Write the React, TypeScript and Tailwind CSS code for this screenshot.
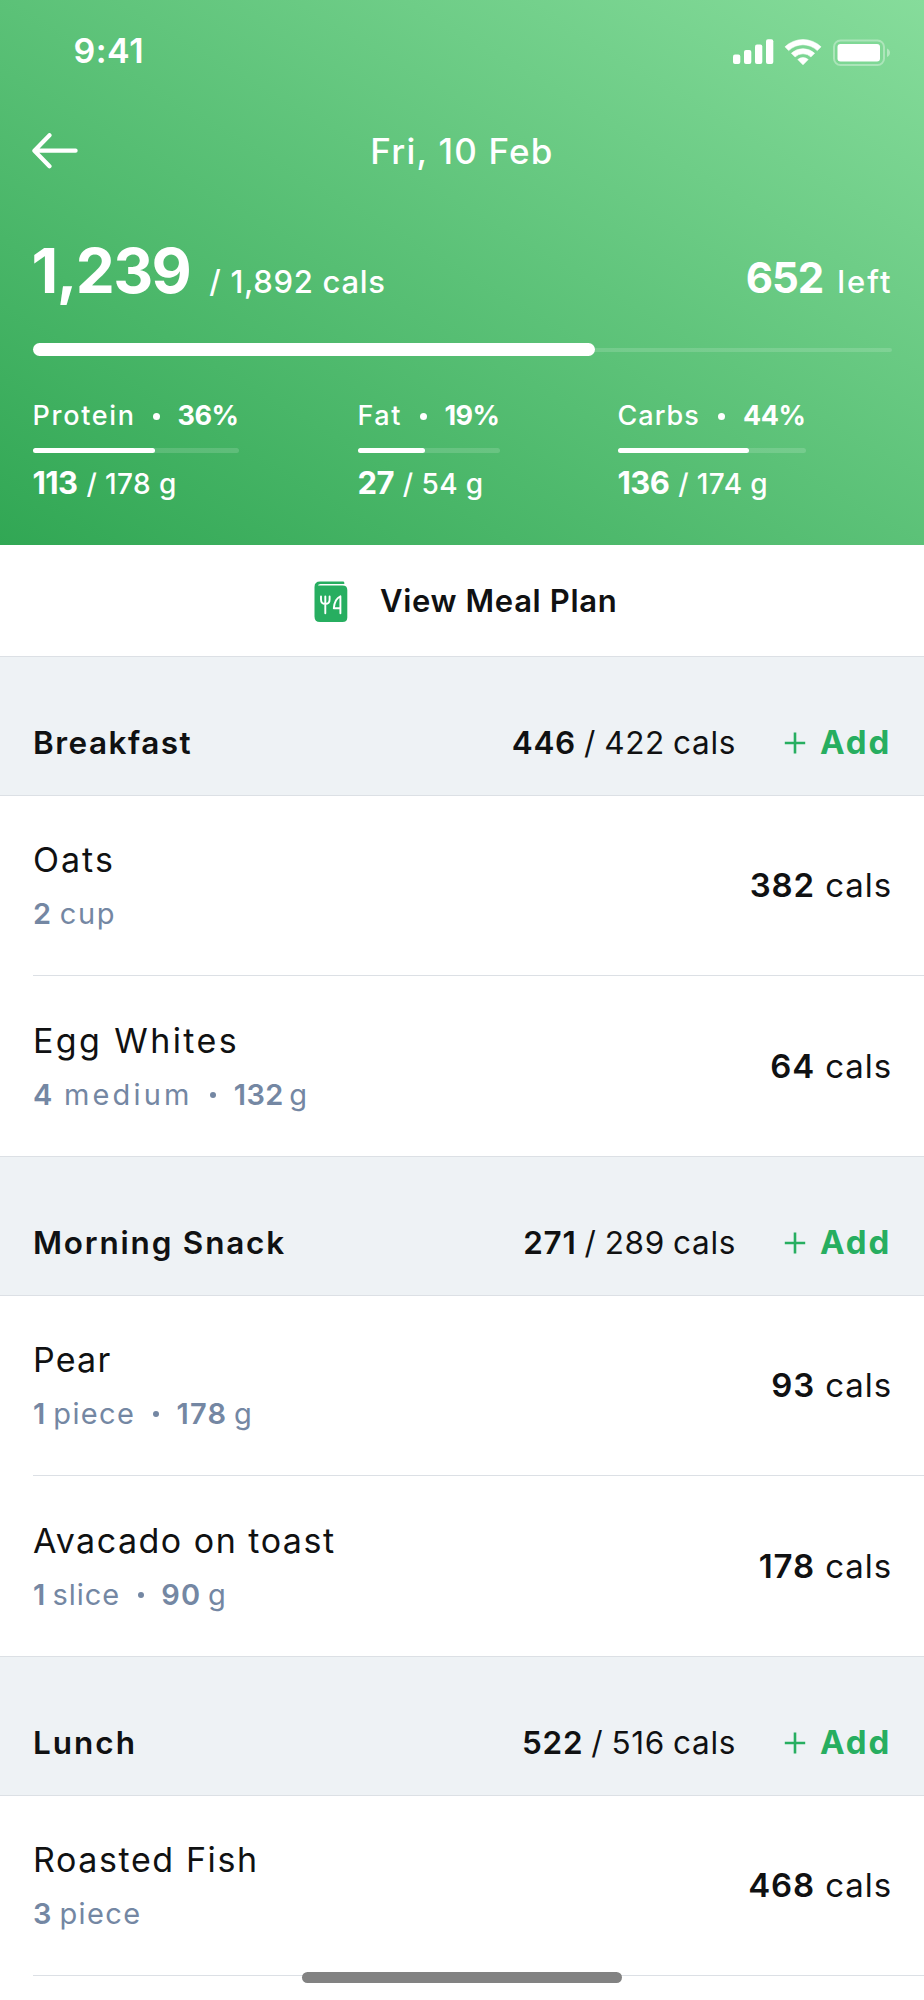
import React from "react";

interface Macro {
  name: string;
  percent: number;
  current: number;
  goal: number;
  width: string;
  tracking: string;
  fill: number;
}

interface Portion {
  amount: number;
  unit: string;
  tracking: string;
}

interface FoodItem {
  name: string;
  tracking: string;
  portions: Portion[];
  cals: number;
}

interface Meal {
  name: string;
  tracking: string;
  current: number;
  goal: number;
  items: FoodItem[];
}

const macros: Macro[] = [
  { name: "Protein", percent: 36, current: 113, goal: 178, width: "w-[206px]", tracking: "tracking-[1.7px]", fill: 59.3 },
  { name: "Fat", percent: 19, current: 27, goal: 54, width: "w-[142px]", tracking: "tracking-[1.5px]", fill: 47.2 },
  { name: "Carbs", percent: 44, current: 136, goal: 174, width: "w-[188px]", tracking: "tracking-[1px]", fill: 70.2 },
];

const meals: Meal[] = [
  {
    name: "Breakfast",
    tracking: "tracking-[1.5px]",
    current: 446,
    goal: 422,
    items: [
      {
        name: "Oats",
        tracking: "tracking-[2px]",
        portions: [{ amount: 2, unit: "cup", tracking: "tracking-[1.7px]" }],
        cals: 382,
      },
      {
        name: "Egg Whites",
        tracking: "tracking-[2.4px]",
        portions: [
          { amount: 4, unit: "medium", tracking: "tracking-[3.2px]" },
          { amount: 132, unit: "g", tracking: "tracking-[0.4px]" },
        ],
        cals: 64,
      },
    ],
  },
  {
    name: "Morning Snack",
    tracking: "tracking-[1.8px]",
    current: 271,
    goal: 289,
    items: [
      {
        name: "Pear",
        tracking: "tracking-[1.2px]",
        portions: [
          { amount: 1, unit: "piece", tracking: "tracking-[1.4px]" },
          { amount: 178, unit: "g", tracking: "tracking-[1.3px]" },
        ],
        cals: 93,
      },
      {
        name: "Avacado on toast",
        tracking: "tracking-[1.5px]",
        portions: [
          { amount: 1, unit: "slice", tracking: "tracking-[1px]" },
          { amount: 90, unit: "g", tracking: "tracking-[1.3px]" },
        ],
        cals: 178,
      },
    ],
  },
  {
    name: "Lunch",
    tracking: "tracking-[2px]",
    current: 522,
    goal: 516,
    items: [
      {
        name: "Roasted Fish",
        tracking: "tracking-[1.6px]",
        portions: [{ amount: 3, unit: "piece", tracking: "tracking-[1.4px]" }],
        cals: 468,
      },
    ],
  },
];

const StatusIcons: React.FC = () => (
  <svg width="160" height="30" viewBox="0 0 160 30" fill="white">
    <rect x="1" y="17.5" width="7.3" height="9.5" rx="2" />
    <rect x="12" y="13" width="7.3" height="14" rx="2" />
    <rect x="23" y="7.5" width="7.3" height="19.5" rx="2" />
    <rect x="34" y="2.2" width="7.3" height="24.8" rx="2" />
    <path d="M53 9.8 A26 26 0 0 1 89 9.8 L85.3 13.6 A20.5 20.5 0 0 0 56.7 13.6 Z" strokeLinejoin="round" stroke="white" strokeWidth="0.6" />
    <path d="M59.4 16.2 A17 17 0 0 1 82.6 16.2 L78.9 19.9 A11.5 11.5 0 0 0 63.1 19.9 Z" strokeLinejoin="round" stroke="white" strokeWidth="0.6" />
    <path d="M65.8 22.5 A8 8 0 0 1 76.2 22.5 L71 27.8 Z" strokeLinejoin="round" stroke="white" strokeWidth="0.6" />
    <rect x="102" y="3.5" width="50" height="24.5" rx="6.5" fill="none" stroke="white" strokeOpacity="0.35" strokeWidth="2" />
    <rect x="105.5" y="7" width="42.5" height="17.5" rx="3" />
    <path d="M155 11.5 C159 13 159 18.5 155 20 Z" fillOpacity="0.4" />
  </svg>
);

const BackArrow: React.FC = () => (
  <svg width="46" height="36" viewBox="0 0 46 36" fill="none" stroke="white" strokeWidth="4.2" strokeLinecap="round" strokeLinejoin="round">
    <path d="M17.5 2.2 L2.4 17.7 L17.5 33.2 M3 17.7 H43.6" />
  </svg>
);

const MealPlanIcon: React.FC = () => (
  <svg width="34" height="42" viewBox="0 0 34 42" fill="none">
    <path d="M6 0.5 H29 Q30.3 0.5 30.3 1.8 V3 H6.5 Q4 3 4 4.6 H28.5 Q33.3 4.6 33.3 9 V36.5 Q33.3 41 28.5 41 H6 Q0.5 41 0.5 35.5 V6 Q0.5 0.5 6 0.5 Z" fill="#27ae60" />
    <g stroke="white" strokeWidth="1.9" strokeLinecap="round" strokeLinejoin="round">
      <path d="M7 15.5 V18.5 Q7 23 11.3 23 Q15.6 23 15.6 18.5 V15.5 M11.3 15.5 V32.2" />
      <path d="M26.4 32.2 V15.3 Q20.5 18 19.8 27.2 H26.4" />
    </g>
  </svg>
);

const PlusIcon: React.FC = () => (
  <svg width="22" height="22" viewBox="0 0 22 22" stroke="#27ae60" strokeWidth="2.6">
    <path d="M11 0.5 V21.5 M0.8 11 H21.2" />
  </svg>
);

const MacroStat: React.FC<{ macro: Macro }> = ({ macro }) => (
  <div>
    <div className={macro.width}>
      <div className="flex items-center justify-between text-[27px] leading-8 font-[550]">
        <span className={macro.tracking}>{macro.name}</span>
        <span className="size-[7px] rounded-full bg-white" />
        <span className="font-bold tracking-[-0.5px]">{macro.percent}%</span>
      </div>
      <div className="mt-4 h-[4.5px] rounded-full bg-white/15">
        <div className="h-full rounded-full bg-white" style={{ width: `${macro.fill}%` }} />
      </div>
    </div>
    <div className="mt-[14.5px] flex items-baseline gap-[9px] leading-8 whitespace-nowrap">
      <span className="text-[31px] font-bold tracking-[-0.6px]">{macro.current}</span>
      <span className="text-[28px] font-[550] tracking-[0.4px]">/ {macro.goal} g</span>
    </div>
  </div>
);

const FoodRow: React.FC<{ item: FoodItem }> = ({ item }) => (
  <div className="ml-[33px] flex h-[181px] items-center justify-between border-[#dce0e5] pr-[32px] first:h-[180px] first:border-b">
    <div className="pt-[4px]">
      <div className={`text-[34px] leading-[50px] ${item.tracking}`}>{item.name}</div>
      <div className="mt-[2px] flex items-center gap-[17.5px] text-[29px] leading-[54px] text-[#7487a3] [word-spacing:-3px]">
        {item.portions.map((portion, i) => (
          <React.Fragment key={portion.unit}>
            {i > 0 && <span className="size-[6px] rounded-full bg-[#7487a3]" />}
            <span className={portion.tracking}>
              <span className="font-semibold">{portion.amount}</span> {portion.unit}
            </span>
          </React.Fragment>
        ))}
      </div>
    </div>
    <div className="text-[33px] tracking-[0.9px]">
      <span className="font-semibold">{item.cals}</span> cals
    </div>
  </div>
);

const MealSection: React.FC<{ meal: Meal }> = ({ meal }) => (
  <section className="h-[500px]">
    <div className="flex h-[140px] items-center border-y border-[#dce0e5] bg-[#eef2f5] px-[33px] pt-[33px] text-[31.5px]">
      <h2 className={`flex-1 font-semibold ${meal.tracking}`}>{meal.name}</h2>
      <div className="tracking-[0.7px] [word-spacing:-1.5px]">
        <span className="font-semibold">{meal.current}</span> / {meal.goal} cals
      </div>
      <button className="ml-[48px] flex items-center gap-[14px] pt-px text-[33px] font-bold tracking-[1.8px] text-[#27ae60]">
        <PlusIcon />
        Add
      </button>
    </div>
    <div>
      {meal.items.map((item) => (
        <FoodRow key={item.name} item={item} />
      ))}
    </div>
  </section>
);

export default function App() {
  return (
    <div className="relative h-[2000px] w-[924px] overflow-hidden bg-white font-['Inter',sans-serif] text-[#101112]">
      <header className="h-[545px] bg-linear-to-tr/srgb from-[#31a754] to-[#86dc9b] px-[32.5px] text-white">
        <div className="flex h-[101px] items-center justify-between pl-[41px]">
          <span className="text-[34px] font-semibold tracking-[0.5px]">9:41</span>
          <div className="pt-[2px]">
            <StatusIcons />
          </div>
        </div>
        <div className="flex h-[100px] items-center">
          <button className="-ml-px w-[46px]" aria-label="Back">
            <BackArrow />
          </button>
          <h1 className="mr-[45px] flex-1 text-center text-[35px] font-[550] tracking-[1.2px]">Fri, 10 Feb</h1>
        </div>
        <div className="mt-[39px] flex h-[62px] items-baseline leading-[62px]">
          <span className="-ml-px text-[62px] font-bold tracking-[-1.6px]">1,239</span>
          <span className="ml-[19px] text-[31px] font-[550] tracking-[0.7px]">/ 1,892 cals</span>
          <span className="ml-auto text-[42px] font-bold tracking-[-1px]">652</span>
          <span className="-mr-px ml-[14px] text-[31px] font-[550] tracking-[2px]">left</span>
        </div>
        <div className="mt-[41px] flex h-[13.5px] items-center">
          <div className="h-[13px] w-[562.5px] rounded-full bg-white" />
          <div className="-ml-1 h-[4px] flex-1 rounded-r-full bg-white/15" />
        </div>
        <div className="mt-[43.5px] grid grid-cols-[325px_260px_1fr]">
          {macros.map((macro) => (
            <MacroStat key={macro.name} macro={macro} />
          ))}
        </div>
      </header>
      <button className="flex h-[111px] w-full items-center gap-[32px] pt-[2px] pl-[314px] text-[31px] font-semibold tracking-[0.65px]">
        <MealPlanIcon />
        View Meal Plan
      </button>
      {meals.map((meal) => (
        <MealSection key={meal.name} meal={meal} />
      ))}
      <div className="absolute bottom-[17px] left-[302px] h-[11px] w-[320px] rounded-full bg-[#828282]" />
    </div>
  );
}
